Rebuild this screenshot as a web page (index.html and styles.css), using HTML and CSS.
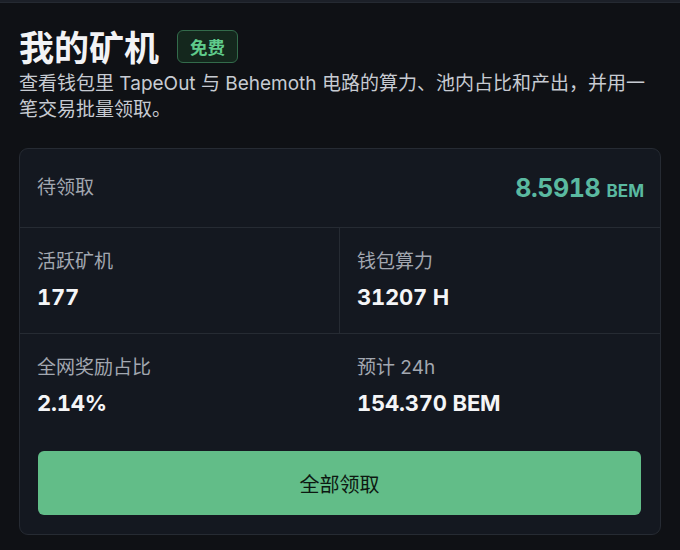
FILE: index.html
```html
<!DOCTYPE html>
<html lang="zh-CN">
<head>
<meta charset="utf-8">
<title>我的矿机</title>
<link rel="stylesheet" href="styles.css">
</head>
<body>
<div class="topbar"></div>
<main class="page">
  <header class="head">
    <div class="title-row">
      <h1 class="title">我的矿机</h1>
      <span class="badge">免费</span>
    </div>
    <p class="desc">查看钱包里 TapeOut 与 Behemoth 电路的算力、池内占比和产出，并用一笔交易批量领取。</p>
  </header>
  <section class="card">
    <div class="pending">
      <span class="label">待领取</span>
      <span class="pending-value">8.5918 <span class="unit">BEM</span></span>
    </div>
    <div class="grid">
      <div class="cell cell-left">
        <div class="label">活跃矿机</div>
        <div class="value">177</div>
      </div>
      <div class="cell">
        <div class="label">钱包算力</div>
        <div class="value">31207 H</div>
      </div>
      <div class="cell cell-left cell-last">
        <div class="label">全网奖励占比</div>
        <div class="value">2.14%</div>
      </div>
      <div class="cell cell-last">
        <div class="label">预计 24h</div>
        <div class="value">154.370 BEM</div>
      </div>
    </div>
    <div class="actions">
      <button class="claim">全部领取</button>
    </div>
  </section>
</main>
</body>
</html>
```

FILE: styles.css
```css
* { box-sizing: border-box; }
html, body {
  margin: 0;
  padding: 0;
  background: #0f1115;
  color: #e8eaee;
  font-family: Inter, "Noto Sans CJK SC", sans-serif;
}
.topbar {
  height: 3px;
  background: #1c2028;
  border-bottom: 1px solid #252a32;
}
.page {
  padding: 25px 19px 0 19px;
}
.title-row {
  display: flex;
  align-items: center;
  gap: 18px;
  height: 40px;
}
.title {
  margin: 0;
  font-size: 35px;
  line-height: 40px;
  font-weight: 700;
  color: #f2f3f5;
}
.badge {
  display: inline-flex;
  align-items: center;
  height: 33px;
  padding: 0 12px;
  border: 1.5px solid #336b4b;
  border-radius: 6px;
  background: #14271d;
  color: #5fcb8b;
  font-size: 17.5px;
  font-weight: 700;
  margin-top: -4px;
}
.desc {
  margin: 3px 0 0 0;
  font-size: 19px;
  line-height: 26px;
  color: #c7cbd2;
}
.card {
  margin-top: 25px;
  border: 1px solid #262b33;
  border-radius: 9px;
  background: #141820;
}
.pending {
  display: flex;
  align-items: center;
  justify-content: space-between;
  padding: 0 16px 0 17px;
  height: 79px;
  border-bottom: 1px solid #262b33;
}
.label {
  font-size: 19px;
  line-height: 24px;
  color: #a2a7b0;
}
.pending-value {
  font-size: 25px;
  font-weight: 700;
  color: #5ab9a0;
  letter-spacing: -0.4px;
  font-variant-numeric: tabular-nums;
}
.unit {
  font-size: 17px;
  letter-spacing: 0;
}
.grid {
  display: grid;
  grid-template-columns: 1fr 1fr;
}
.cell {
  padding: 22px 17px 22px 17px;
  border-bottom: 1px solid #262b33;
  display: flex;
  flex-direction: column;
  gap: 9px;
}
.cell-left {
  border-right: 1px solid #262b33;
}
.cell-last {
  border-bottom: none;
  border-right: none;
}
.value {
  font-size: 22px;
  line-height: 28px;
  font-weight: 700;
  color: #f4f5f7;
  letter-spacing: -0.2px;
  font-variant-numeric: tabular-nums;
}
.actions {
  padding: 12px 19px 19px 18px;
}
.claim {
  display: block;
  width: 100%;
  height: 64px;
  border: none;
  border-radius: 6px;
  background: #62bd88;
  color: #0d1811;
  font-family: Inter, "Noto Sans CJK SC", sans-serif;
  font-size: 20px;
  cursor: pointer;
}
```
